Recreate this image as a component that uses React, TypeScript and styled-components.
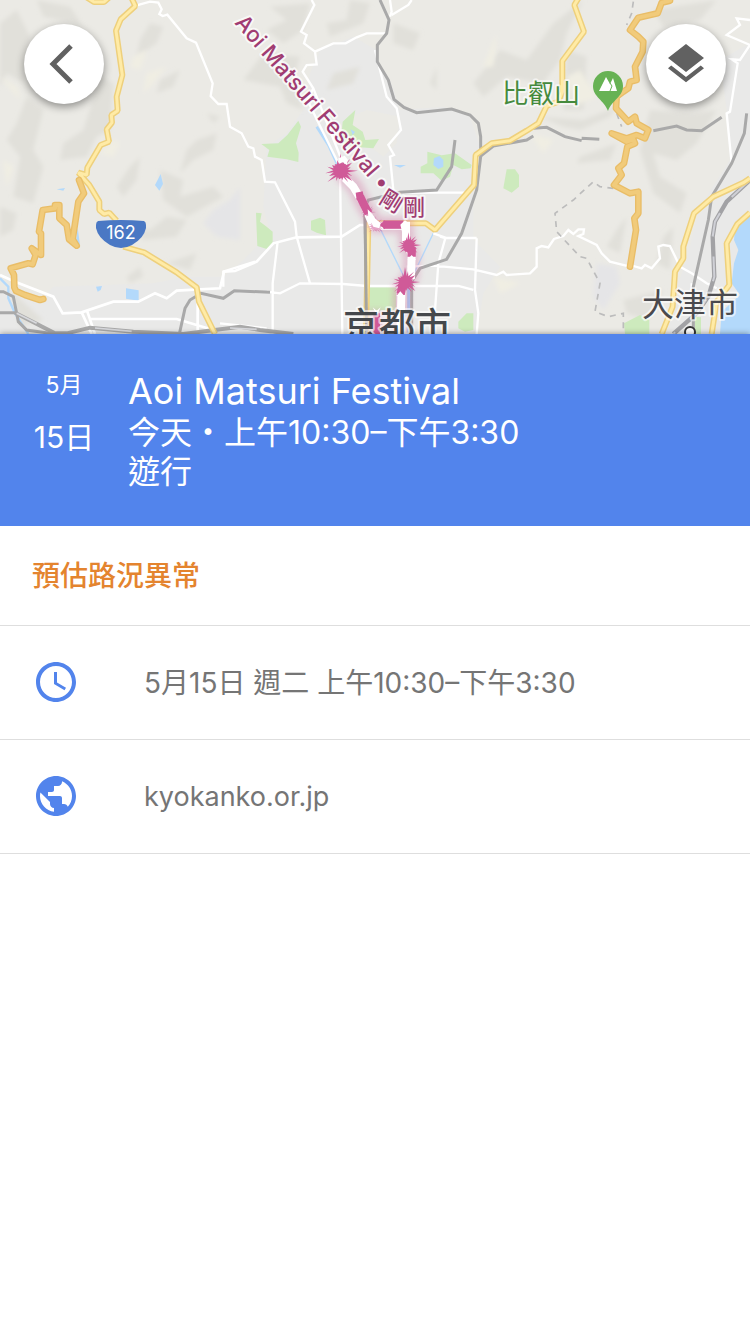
import type { ReactNode } from 'react'
import styled, { createGlobalStyle } from 'styled-components'
import { MdAccessTime, MdLayers, MdPublic } from 'react-icons/md'

const PINK = '#d05a98'

// Spiky firework shape, drawn around its own centre
const burst = (cx: number, cy: number, r: number) => {
  const reach = [1, 0.6, 0.75, 0.5, 0.9, 0.65, 0.8]
  const points: string[] = []
  for (let i = 0; i < 38; i++) {
    const radius = i % 2 ? r * 0.42 : r * reach[i % 7]
    const angle = (i / 38) * Math.PI * 2 + (i % 3) * 0.06
    points.push(`${Math.round(cx + Math.cos(angle) * radius)},${Math.round(cy + Math.sin(angle) * radius)}`)
  }
  return points.join(' ')
}

const Highway = ({ d }: { d: string }) => (
  <>
    <Line d={d} color="#eed07c" size={18} join="bevel" />
    <Line d={d} color="#ffeba6" size={9} join="bevel" />
  </>
)

const TollRoad = ({ d }: { d: string }) => (
  <>
    <Line d={d} color="#e9bd67" size={20} join="round" />
    <Line d={d} color="#f1cb7b" size={12} join="round" />
  </>
)

const MapView = () => (
  <MapCanvas viewBox="0 0 750 334" preserveAspectRatio="xMidYMid slice" role="img" aria-label="京都市">
    <defs>
      <filter id="soft" x="-20%" y="-20%" width="140%" height="140%">
        <feGaussianBlur stdDeviation="7" />
      </filter>
      <filter id="glow" x="-50%" y="-20%" width="200%" height="140%">
        <feGaussianBlur stdDeviation="9" />
      </filter>
    </defs>
    <rect width="750" height="334" fill="#e9e9e8" />

    <g transform="scale(0.33333)">
      {/* hills */}
      <g fill="#ebeae5">
        <path d="M0 0H2250V130L2160 180L2180 330L2190 480L2100 620L2060 780L1980 1002H1430L1450 880L1500 800L1420 720V560L1440 440L1410 350L1330 320L1200 330L1170 240L1130 180V150L1060 110L960 150L930 220L910 330L860 400L800 440L790 620L810 700L720 790L670 830L560 830L460 850L160 860L120 900L0 860Z" />
        <path d="M1030 360L1100 330L1200 350L1190 430L1150 470L1110 440L1080 400Z" />
        <path d="M1350 120L1410 110V300L1340 320L1200 320L1160 200L1130 150V0H1410Z" />
      </g>
      <g fill="#e1e0da" filter="url(#soft)">
        <path d="M0 70L50 30L90 110L70 250L20 220L0 260Z" />
        <path d="M110 0L210 20L250 80L180 60L130 50Z" />
        <path d="M300 230L340 250L330 390L290 410L260 470L180 480L190 430L250 390Z" />
        <path d="M80 290L130 330L100 450L130 500L100 610L40 590L60 470L20 420L50 370Z" />
        <path d="M420 120L450 70L490 80L470 130L410 170Z" />
        <path d="M480 240L540 210L520 260L470 280Z" />
        <path d="M620 340L660 350L640 370ZM590 420L650 400L640 450L580 480L540 520L560 450Z" />
        <path d="M390 500L420 470L410 540L370 590L350 560Z" />
        <path d="M480 510L550 540L540 590L640 560L670 590L560 650L490 600Z" />
        <path d="M400 680L450 690L500 650L560 660L530 710L430 720Z" />
        <path d="M380 830L420 800L430 830L390 850ZM500 790L590 760L570 810Z" />
        <path d="M0 620L50 640L40 690L0 710ZM30 870L130 960L60 980Z" />
        <path d="M810 20L930 10L910 90L850 130L800 90L860 60Z" />
        <path d="M730 240L790 160L900 170L880 240L910 330L860 310L840 260Z" />
        <path d="M980 70L1040 60L1050 0L1110 10L1090 70L990 110Z" />
        <path d="M1000 220L1080 200L1060 250L980 270Z" />
        <path d="M1180 70L1260 100L1240 150L1180 130ZM1290 250L1310 200V270Z" />
        <path d="M1500 150L1580 180L1660 70L1750 0L1700 100L1680 180L1630 250L1520 230L1450 290L1420 250Z" />
        <path d="M1700 150L1760 170L1750 330L1690 330Z" />
        <path d="M1620 350L1750 360L1850 320L1830 350L1740 390L1690 380Z" />
        <path d="M1950 330L2080 340L2150 330L2090 430L2030 480L1960 460L1980 530L2060 580L2040 640L1960 580L1920 450Z" />
        <path d="M1740 470L1850 430L1830 480L1730 490Z" />
        <path d="M1850 690L1880 650L1860 760L1820 740Z" />
        <path d="M1990 710L2020 680L2010 810L1970 790Z" />
        <path d="M1870 900L1990 870L1940 960L1880 940ZM1960 30L2150 0L2100 60L1990 80Z" />
      </g>
      <g fill="#f0eee3" filter="url(#soft)">
        <path d="M400 170L440 150L420 210L390 200ZM440 220L500 200L450 260L430 280Z" />
        <path d="M340 420L360 430L340 470L300 460ZM10 480L40 500L20 560ZM0 230L50 260L60 300Z" />
        <path d="M1590 400L1660 420L1630 460ZM1450 200L1490 100L1480 200Z" />
        <path d="M1480 830L1560 850L1500 880ZM1700 230L1740 210L1790 290L1720 320Z" />
      </g>
      <g fill="#e5e5e7" filter="url(#soft)">
        <path d="M640 630L690 600L720 560V720L650 710L610 670Z" />
        <path d="M1790 790L1850 800L1860 850L1810 930L1780 890Z" />
      </g>

      {/* parks */}
      <g fill="#cdeabd">
        <path d="M784 432L835 430L862 405L895 362L903 380L888 430L896 458L895 486L860 478L802 470L808 450Z" />
        <path d="M1028 365L1066 330L1058 375L1088 395L1096 420L1137 417L1120 445L1060 440L1022 430Z" />
        <path d="M768 638L785 640L780 665L800 680L818 695V730L800 747L772 738L770 690Z" />
        <path d="M933 662L960 653L975 660L978 706L950 698L933 690Z" />
        <path d="M1282 455L1325 466L1365 460L1415 495L1412 505L1385 508L1360 495L1350 530L1325 542L1300 520L1262 520L1262 500L1282 490Z" />
        <path d="M1520 508L1545 508L1557 525V560L1535 578L1510 565Z" />
        <path d="M1108 862H1188V932H1108ZM1375 965L1400 940H1420V990L1395 995L1375 985Z" />
        <path d="M1872 970L1920 945L1948 960V1002H1875ZM2085 950L2103 952V1002H2085Z" />
      </g>

      {/* water */}
      <g fill="#b3d9fb">
        <path d="M2250 645L2205 685L2202 720L2215 750L2202 790L2195 850L2220 885L2165 935L2160 1002H2250Z" />
        <path d="M465 555L482 522L489 552L478 572ZM170 568L195 564L190 572ZM233 683L240 735L228 725Z" />
        <path d="M378 865L416 871V902L378 896ZM288 860L306 858L302 870L293 875Z" />
        <path d="M1302 475L1318 468L1330 480V500L1315 507L1300 495ZM1182 495L1218 495L1200 503ZM1052 388L1065 396L1058 405Z" />
      </g>
      <Line d="M0 835L25 860V895L45 940L85 1002" color="#b3d9fb" size={7} />
      <Line d="M950 380L985 435L1015 500" color="#b3d9fb" size={8} />
      <Line d="M1140 685L1212 830M1300 700L1242 820" color="#b3d9fb" size={4} />
      <Line d="M1226 850V1002" color="#a7cbf3" size={9} />

      {/* local streets */}
      <Line
        size={7}
        color="#fff"
        d="M410 16L450 5L475 8L485 28L478 42L488 48L502 44L560 115L588 128L638 250L632 288L655 312H680L690 380L725 400L745 440L760 445L765 470L785 480L795 545L825 547L885 665L890 710L930 850"
      />
      <Line
        size={7}
        color="#fff"
        d="M935 0L943 15L903 95L920 105L912 130L945 155L950 193L920 195L908 215L940 265L922 300L1020 500M945 155L1000 130L1037 130L1070 112L1100 100H1155M940 265L1025 480"
      />
      <Line
        size={7}
        color="#fff"
        d="M1170 0L1175 35L1170 50M1235 0L1225 15L1175 45M1125 150L1160 290L1190 325L1203 390L1165 435L1182 465L1170 470L1180 570M1200 578H1390L1410 580"
      />
      <Line
        size={8}
        color="#fff"
        d="M0 825L45 845L160 890L188 940L245 937L340 905H415L465 880L500 895L530 872L660 865L672 815L705 813L770 785L820 730L890 712L1025 710L1080 675H1110M245 937L275 1002M262 935L285 1002M270 957H530L640 990M593 870V1002"
      />
      <Line
        size={7}
        color="#fff"
        d="M1020 500L1027 1002M670 860V815L765 785M833 725L818 850V1002M660 970L800 985M800 875L840 880L900 850L1030 852L1100 858H1375L1420 870M1320 710L1336 714L1315 790L1300 1002M1220 800L1300 797L1420 808L1490 825L1510 815L1520 825L1590 820L1610 800V745L1625 738L1645 742L1662 717L1690 708L1705 690L1720 702L1735 688H1752L1750 702L1735 708L1790 735L1805 760L1830 785L1890 800M1300 700L1340 714H1430M1430 715L1425 870L1435 940L1430 1002"
      />
      <Line
        size={7}
        color="#fff"
        d="M2250 60L2210 55L2220 75L2180 105L2250 135L2220 180L2195 178L2213 190L2190 335L2180 340L2195 490M1890 795L1925 805L1935 795L1955 805L1980 775L1975 740L1990 735L2010 738L2040 800L2075 820L2120 850L2150 865M2075 850V900"
      />

      {/* footpaths */}
      <Line
        d="M1900 5L1895 40L1880 75M1850 340L1865 380M1880 430L1860 520M1840 565L1800 560L1780 545L1720 600L1665 640L1670 695L1740 770L1760 775L1800 850L1785 935L1825 950L1870 940V1000"
        color="#bcbcbc"
        size={5}
        dash="18 16"
      />

      {/* railways */}
      <g>
        <Line
          size={9}
          color="#a9a9a9"
          d="M1140 0L1167 60L1160 100L1132 135V185L1165 240L1182 298L1212 322L1250 338L1355 327L1410 345L1435 370L1442 410V470L1430 570L1385 700L1340 778L1260 805L1235 845V1002"
        />
        <Line
          size={9}
          color="#a9a9a9"
          d="M1440 470L1480 438L1580 420L1600 408M1600 385L1640 382L1695 410L1745 422M1745 415L1798 418M1960 392L2030 378L2060 390L2105 392L2165 352"
        />
        <Line
          size={9}
          color="#a9a9a9"
          d="M2240 340L2233 400L2195 490L2135 590L2125 660L2080 860V1002M1365 420L1355 500L1310 570L1200 577L1105 600L1095 620L1100 1002"
        />
        <Line
          size={9}
          color="#a9a9a9"
          d="M0 875H10L40 890L55 965L80 990L165 1002M538 1002L555 925L570 900L603 880L670 895L703 872L810 877M0 938H50"
        />
        <Line size={12} color="#a9a9a9" d="M45 938L165 1000H200L270 983L400 995L550 1002L720 980L780 990L880 1002" />
        <Line size={5} color="#d8d9dd" d="M50 940L110 970M285 984L395 994M690 984L770 988" />
        <Line size={13} color="#a2a2a5" d="M2250 540L2180 605L2145 665L2138 710L2143 830L2125 890L2090 940L2020 1002" />
        <Line
          size={6}
          color="#cfd0d6"
          d="M2250 540L2180 605L2145 665L2138 710L2143 830L2125 890L2090 940L2020 1002"
          dash="75 60"
        />
      </g>

      {/* highways */}
      <Highway d="M260 -8L282 6H312L328 -8M395 -5L406 18L362 58L348 92L367 225L350 290L353 332L334 345L336 368L320 388L327 425L302 435L262 503L260 525L235 518L268 555L298 605V630L312 642L328 638L350 662M370 740L432 757L530 817L590 862L597 905L645 1002" />
      <Highway d="M1735 -5L1723 15L1752 95L1687 183V275L1675 305L1640 318L1615 370L1580 392L1530 422L1475 430L1427 465L1422 555L1305 690L1278 670H1105L1098 1002" />
      <Highway d="M2250 535L2230 548L2140 590L2082 640L2050 740V775L2025 815L2018 920L1985 1002" />
      <Highway d="M2250 638L2212 672L2180 730L2188 855L2150 905L2135 1002" />
      <Line d="M1095 640L1100 1002" color="#a5a39f" size={9} />
      <TollRoad d="M237 540L252 580L235 605L218 718L230 737L207 718L200 675L178 655V615H165V625L128 630L117 695L123 700V765L95 745L107 765L98 793L85 790L32 805L42 825L43 862L48 873L75 885L120 900L130 897" />
      <TollRoad d="M2010 2L1985 8L1973 40L1915 53L1890 90L1915 110L1930 125L1928 155L1905 200L1910 240L1890 245L1885 265L1870 275L1850 290L1848 325L1885 365L1905 350L1910 370L1945 390L1935 415L1910 405L1880 415L1835 400L1880 425L1900 418L1905 430L1882 440L1872 490L1855 505L1865 525L1842 555L1890 580L1915 575V640L1903 655L1908 690L1890 800" />

      {/* parade route */}
      <path
        d="M1022 515L1065 560L1095 620L1130 675H1215L1222 735L1235 765L1232 830L1205 860L1201 1010M1130 930V1002"
        fill="none"
        stroke="#d272a3"
        strokeWidth="50"
        opacity="0.35"
        filter="url(#glow)"
      />
      <Line d="M1028 528L1060 560L1090 610L1120 677H1218V720L1235 765L1233 830L1205 850L1201 1010" color="#fff" size={24} />
      <Line d="M1080 590L1105 640" color={PINK} size={25} />
      <Line d="M1150 674H1210" color={PINK} size={25} />
      <Line d="M1217 740L1235 750V770M1210 845L1202 882" color={PINK} size={25} />
      <Line d="M1130 940V1002" color={PINK} size={20} />
      <g fill={PINK}>
        <path d="M1067 578L1088 574L1092 592L1070 600ZM1138 674L1155 661V688ZM1190 885L1202 860L1214 885Z" />
        <polygon points={burst(1022, 512, 52)} />
        <polygon points={burst(1226, 735, 38)} />
        <polygon points={burst(1216, 846, 45)} />
        <polygon points={burst(1104, 636, 24)} opacity="0.7" />
        <polygon points={burst(1128, 678, 30)} opacity="0.55" />
      </g>
      <g fill="#fff">
        <path d="M1015 475L1034 467L1044 480L1040 495L1028 486L1018 492ZM1103 628L1115 640L1125 655L1142 670L1138 685L1120 680L1105 650ZM1201 674L1215 661L1230 672V695L1206 695Z" />
        <path d="M1235 765L1248 780H1222ZM1201 874L1213 888H1189ZM1118 922L1130 932L1142 922L1130 946Z" />
      </g>
    </g>

    {/* mountain pin */}
    <path
      d="M608 71a15 15 0 0 1 15 15c0 11-11 14-15 25c-4-11-15-14-15-25a15 15 0 0 1 15-15z"
      fill="#67b254"
    />
    <path d="M599 91l7-14 4 7 3-6 4 13z" fill="#fff" />
    <path d="M610 83l2 3-2 5" fill="none" stroke="#67b254" strokeWidth="1" />

    {/* route shield */}
    <path d="M98 221q23-2 46 0q2 1 2 4v3q-2 10-14 17q-11 6-22 0q-12-7-14-17v-3q0-3 2-4z" fill="#4a78c4" />
    <MapLabel x="121" y="239" size={18} fill="#fff" $plain>
      162
    </MapLabel>
    <circle cx="690" cy="332" r="5" fill="#fff" stroke="#333" strokeWidth="2" />

    <MapLabel x="541" y="103" size={26} fill="#458a3d">
      比叡山
    </MapLabel>
    <MapLabel x="690" y="316" size={32} fill="#4a4a4e">
      大津市
    </MapLabel>
    <MapLabel x="397" y="339" size={36} fill="#45484c" $bold>
      京都市
    </MapLabel>
    <RouteLabel transform="translate(234 23) rotate(49)">Aoi Matsuri Festival •</RouteLabel>
    <RouteLabel transform="translate(378 202) rotate(32)">剛</RouteLabel>
    <RouteLabel x="403" y="215">
      剛
    </RouteLabel>
  </MapCanvas>
)

const DetailRow = ({ icon, children }: { icon: ReactNode; children: ReactNode }) => (
  <Row>
    {icon}
    <RowText>{children}</RowText>
  </Row>
)

const App = () => (
  <>
    <GlobalStyle />
    <Page>
      <MapArea>
        <MapView />
        <Controls>
          <RoundButton type="button" aria-label="返回">
            <svg width="48" height="48" viewBox="0 0 48 48" fill="none" stroke="currentColor" strokeWidth="5">
              <path d="M31 6L13 24L31 42" />
            </svg>
          </RoundButton>
          <RoundButton type="button" aria-label="圖層">
            <MdLayers size={48} />
          </RoundButton>
        </Controls>
      </MapArea>

      <Header>
        <DateBlock>
          <Month>5月</Month>
          <Day>15日</Day>
        </DateBlock>
        <div>
          <Title>Aoi Matsuri Festival</Title>
          <Subtitle>今天・上午10:30–下午3:30</Subtitle>
          <Subtitle>遊行</Subtitle>
        </div>
      </Header>

      <main>
        <Notice>預估路況異常</Notice>
        <DetailRow icon={<MdAccessTime size={48} />}>5月15日 週二 上午10:30–下午3:30</DetailRow>
        <DetailRow icon={<MdPublic size={48} />}>
          <SiteLink href="https://kyokanko.or.jp">kyokanko.or.jp</SiteLink>
        </DetailRow>
      </main>
    </Page>
  </>
)

export default App

const GlobalStyle = createGlobalStyle`
  * {
    box-sizing: border-box;
  }

  body {
    margin: 0;
    background: #fff;
    font-family: Inter, 'Noto Sans CJK TC', sans-serif;
  }
`

const Page = styled.div`
  min-height: 100vh;
  background: #fff;
`

const MapArea = styled.section`
  position: relative;
  height: 334px;
  overflow: hidden;
`

const MapCanvas = styled.svg`
  display: block;
  width: 100%;
  height: 100%;
`

const Line = styled.path<{ size: number; color: string; dash?: string; join?: string }>`
  fill: none;
  stroke: ${(props) => props.color};
  stroke-width: ${(props) => props.size};
  stroke-dasharray: ${(props) => props.dash || 'none'};
  stroke-linejoin: ${(props) => props.join || 'miter'};
  stroke-linecap: ${(props) => (props.join === 'round' ? 'round' : 'butt')};
`

const MapLabel = styled.text<{ size: number; $bold?: boolean; $plain?: boolean }>`
  font-size: ${(props) => props.size}px;
  font-weight: ${(props) => (props.$bold ? 500 : 400)};
  text-anchor: middle;
  paint-order: stroke;
  stroke: ${(props) => (props.$plain ? 'none' : 'rgba(255, 255, 255, 0.6)')};
  stroke-width: 4px;
  stroke-linejoin: round;
`

const RouteLabel = styled.text`
  font-size: 22px;
  font-weight: 500;
  fill: #a03c72;
  paint-order: stroke;
  stroke: rgba(255, 255, 255, 0.7);
  stroke-width: 4px;
  stroke-linejoin: round;
`

const Controls = styled.div`
  position: absolute;
  top: 24px;
  left: 24px;
  right: 24px;
  display: flex;
  justify-content: space-between;
`

const RoundButton = styled.button`
  display: flex;
  align-items: center;
  justify-content: center;
  width: 80px;
  height: 80px;
  padding: 0;
  border: 0;
  border-radius: 50%;
  background: #fff;
  color: #616161;
  box-shadow: 0 3px 8px rgba(0, 0, 0, 0.4);
  cursor: pointer;
`

const Header = styled.header`
  position: relative;
  display: flex;
  min-height: 192px;
  padding: 36px 32px 32px 0;
  background: #5284ec;
  color: #fff;
  box-shadow: 0 0 6px rgba(0, 0, 0, 0.4);
  clip-path: inset(-8px 0 0 0);
`

const DateBlock = styled.div`
  flex: none;
  width: 128px;
  text-align: center;
`

const Month = styled.div`
  font-size: 23px;
  line-height: 30px;
`

const Day = styled.div`
  margin-top: 16px;
  font-size: 30px;
  line-height: 42px;
`

const Title = styled.h1`
  margin: 0;
  font-size: 36px;
  font-weight: 400;
  line-height: 43px;
`

const Subtitle = styled.p`
  margin: 0;
  font-size: 32px;
  line-height: 39px;
`

const Notice = styled.h2`
  margin: 0;
  padding: 31px 32px 29px;
  border-bottom: 1px solid #dedede;
  color: #e4842f;
  font-size: 28px;
  font-weight: 500;
  line-height: 39px;
`

const Row = styled.div`
  display: flex;
  align-items: flex-start;
  gap: 64px;
  padding: 32px 32px 31px;
  border-bottom: 1px solid #dedede;

  svg {
    flex: none;
    color: #5284ec;
  }
`

const RowText = styled.div`
  color: #757575;
  font-size: 28px;
  line-height: 50px;
`

const SiteLink = styled.a`
  display: block;
  color: inherit;
  font-size: 27px;
  text-decoration: none;
`
